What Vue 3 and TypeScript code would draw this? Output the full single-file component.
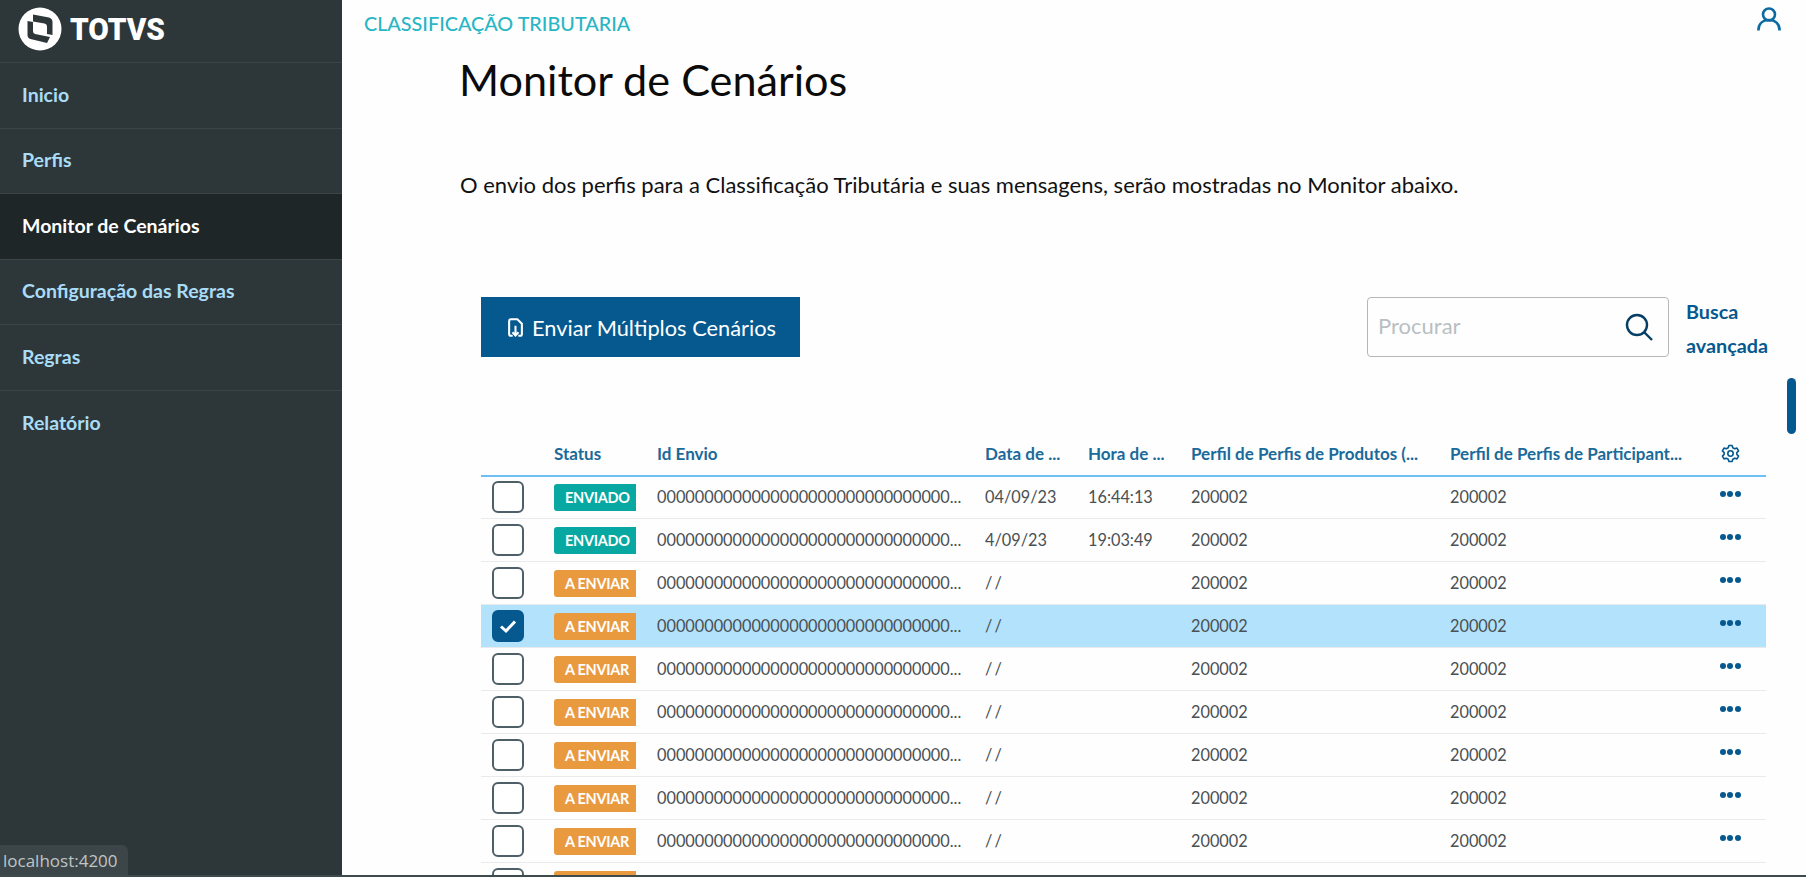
<script setup lang="ts">
interface Row { status: string; date: string; time: string; selected?: boolean }
const menu: string[] = ['Inicio', 'Perfis', 'Monitor de Cenários', 'Configuração das Regras', 'Regras', 'Relatório']
const rows: Row[] = [
  { status: 'ENVIADO', date: '04/09/23', time: '16:44:13' },
  { status: 'ENVIADO', date: '4/09/23', time: '19:03:49' },
  { status: 'A ENVIAR', date: '/ /', time: '' },
  { status: 'A ENVIAR', date: '/ /', time: '', selected: true },
  { status: 'A ENVIAR', date: '/ /', time: '' },
  { status: 'A ENVIAR', date: '/ /', time: '' },
  { status: 'A ENVIAR', date: '/ /', time: '' },
  { status: 'A ENVIAR', date: '/ /', time: '' },
  { status: 'A ENVIAR', date: '/ /', time: '' },
  { status: 'A ENVIAR', date: '/ /', time: '' }
]
const idEnvio = '0000000000000000000000000000000'
</script>

<template>
  <div class="app">
    <aside class="side">
      <div class="brand">
        <svg class="mark" viewBox="0 0 44 44" width="44" height="44">
          <circle cx="22" cy="22" r="21.5" fill="#fff" />
          <path d="M15 7.5 L31 10.5 Q34.5 11.5 34.5 15 V28 L29 27 V19.5 Q29 17 26.5 16.5 L15 14.5 Z" fill="#2d3739" />
          <path d="M9.5 14 V28 Q9.5 31 12.5 32 L29 36 L32 30 L17 27 Q15 26.5 15 24 V15 Z" fill="#2d3739" />
        </svg>
        <span class="wordmark">TOTVS</span>
      </div>
      <nav>
        <a v-for="m in menu" :key="m" class="item" :class="{ on: m === 'Monitor de Cenários' }">{{ m }}</a>
      </nav>
    </aside>
    <main class="main">
      <header class="top">
        <span class="crumb">CLASSIFICAÇÃO TRIBUTARIA</span>
        <svg class="user" viewBox="0 0 24 24" width="24" height="24" fill="none" stroke="#0c6aa3" stroke-width="2.6">
          <circle cx="12" cy="7.5" r="6" />
          <path d="M1.4 23.5 C1.4 16.5 6 13 12 13 C18 13 22.6 16.5 22.6 23.5" />
        </svg>
      </header>
      <div class="content">
        <h1>Monitor de Cenários</h1>
        <p class="lead">O envio dos perfis para a Classificação Tributária e suas mensagens, serão mostradas no Monitor abaixo.</p>
        <div class="actions">
          <button class="send">
            <svg viewBox="0 0 16 20" width="15" height="19" fill="none" stroke="#fff" stroke-width="2.2">
              <path d="M5 18.8 H3.2 Q1.2 18.8 1.2 16.8 V3.2 Q1.2 1.2 3.2 1.2 H10 L14.8 6 V16.8 Q14.8 18.8 12.8 18.8 H11" />
              <path d="M8 8 V18 M4.8 15 L8 18.5 L11.2 15" />
            </svg>
            <span>Enviar Múltiplos Cenários</span>
          </button>
          <div class="search-wrap">
            <div class="search">
              <span class="ph">Procurar</span>
              <svg viewBox="0 0 28 28" width="28" height="28" fill="none" stroke="#063f66" stroke-width="2.4">
                <circle cx="12" cy="12" r="10" />
                <path d="M19.5 19.5 L27 27" />
              </svg>
            </div>
            <a class="adv">Busca<br />avançada</a>
          </div>
        </div>
        <div class="table">
          <div class="row head">
            <span></span>
            <span>Status</span>
            <span>Id Envio</span>
            <span>Data de ...</span>
            <span>Hora de ...</span>
            <span>Perfil de Perfis de Produtos (...</span>
            <span>Perfil de Perfis de Participant...</span>
            <span class="act">
              <svg viewBox="0 0 24 24" width="19" height="19" fill="none" stroke="#05598f" stroke-width="2" stroke-linejoin="round">
                <path d="M10 1.8 h4 l.9 3 2.3 1.2 3-.8 2 3.5-2.2 2.2 v2.2 l2.2 2.2-2 3.5-3-.8-2.3 1.2-.9 3 h-4 l-.9-3-2.3-1.2-3 .8-2-3.5 2.2-2.2 v-2.2 l-2.2-2.2 2-3.5 3 .8 2.3-1.2 z" />
                <circle cx="12" cy="12" r="3.4" />
              </svg>
            </span>
          </div>
          <div v-for="(r, i) in rows" :key="i" class="row body" :class="{ sel: r.selected }">
            <span class="cb" :class="{ checked: r.selected }">
              <svg v-if="r.selected" viewBox="0 0 20 20" width="20" height="20" fill="none" stroke="#fff" stroke-width="3">
                <path d="M3 10.5 L8 15 L17 5.5" />
              </svg>
            </span>
            <span class="badge" :class="r.status === 'ENVIADO' ? 'ok' : 'wait'">{{ r.status }}</span>
            <span class="cell id">{{ idEnvio }}...</span>
            <span class="cell">{{ r.date }}</span>
            <span class="cell">{{ r.time }}</span>
            <span class="cell">200002</span>
            <span class="cell">200002</span>
            <span class="act dots"><i></i><i></i><i></i></span>
          </div>
        </div>
      </div>
      <div class="thumb"></div>
    </main>
    <div class="status-bubble">localhost:4200</div>
  </div>
</template>

<style>
html, body { margin: 0; overflow: hidden; }
</style>

<style scoped>
.app { display: flex; height: 875px; width: 1806px; overflow: hidden; border-bottom: 2px solid #3f4a4d; font-family: Lato, "Noto Sans", sans-serif; background: #fefefe; position: relative; }
.side { width: 342px; flex: none; background: #2d3739; }
.brand { height: 63px; display: flex; align-items: center; padding: 0 0 4px 18px; gap: 8px; box-sizing: border-box; border-bottom: 1px solid #3b4547; }
.wordmark { font-family: Roboto, sans-serif; font-weight: 900; font-size: 32px; color: #fff; transform: scaleX(0.93); transform-origin: left center; }
.item { display: flex; align-items: center; height: 65.5px; box-sizing: border-box; padding: 0 0 2px 22px; font-size: 19.5px; font-weight: 700; color: #a9dcf7; border-bottom: 1px solid #3b4547; }
.item:last-child { border-bottom: 0; }
.item.on { background: #1e2628; color: #fff; }
.main { flex: 1; position: relative; min-width: 0; }
.top { height: 46px; display: flex; justify-content: space-between; padding: 10px 25px 0 22px; box-sizing: border-box; }
.crumb { font-size: 19.8px; line-height: 26px; color: #29b6c5; font-weight: 500; }
.user { margin-top: -3px; }
.content { padding-left: 118px; padding-right: 40px; }
h1 { margin: 8px 0 0 -1px; font-size: 43.2px; font-weight: 400; line-height: 50px; color: #0b0b0b; }
.lead { margin: 67px 0 0; font-size: 22px; line-height: 28px; color: #111; }
.actions { display: flex; justify-content: space-between; margin: 98px 0 0 21px; height: 60px; }
.send { width: 319px; height: 60px; border: 0; background: #05598f; color: #fff; font: inherit; font-size: 21.8px; display: flex; align-items: center; justify-content: center; gap: 9px; padding: 0 0 0 3px; }
.search-wrap { display: flex; flex: none; width: 399px; }
.search { width: 302px; flex: none; height: 60px; box-sizing: border-box; border: 1px solid #b4b8ba; border-radius: 4px; display: flex; align-items: center; justify-content: space-between; padding: 0 15px 0 10px; }
.ph { font-size: 22px; color: #b9bfc2; margin-top: -3px; }
.adv { margin-left: 17px; font-size: 19.8px; font-weight: 700; line-height: 34px; color: #05598f; margin-top: -3px; white-space: nowrap; }
.table { margin: 59px 0 0 21px; width: 1285px; }
.row { display: grid; grid-template-columns: 73px 103px 328px 103px 103px 259px 260px 56px; align-items: center; }
.head { padding-top: 15px; height: 44px; margin-bottom: -1px; font-size: 17px; font-weight: 700; color: #1a6a9a; border-bottom: 2px solid #6cc0f5; }
.body { height: 43px; box-sizing: border-box; border-bottom: 1px solid #e8eaeb; font-size: 16.3px; color: #4a5053; }
.body.sel { background: #b3e2fc; }
.cb { width: 32px; height: 32px; box-sizing: border-box; margin-left: 11px; border: 2px solid #4f5f68; border-radius: 6px; background: #fff; display: flex; align-items: center; justify-content: center; }
.cb.checked { background: #05598f; border-color: #05598f; }
.badge { width: 82px; height: 27px; line-height: 27px; box-sizing: border-box; padding-left: 11px; white-space: nowrap; font-size: 14.5px; font-weight: 700; letter-spacing: -0.3px; color: #fff; border-radius: 3px 0 0 3px; }
.badge.ok { background: #07a8a2; }
.badge.wait { background: #ea9a3e; }
.cell { white-space: nowrap; overflow: hidden; word-spacing: -2px; margin-top: -1px; }
.act { display: flex; justify-content: center; margin-left: -16px; }
.dots { gap: 1.5px; margin-top: -6px; }
.dots i { width: 6px; height: 6px; border-radius: 50%; background: #05598f; }
.thumb { position: absolute; top: 378px; right: 10px; width: 9px; height: 56px; border-radius: 5px; background: #05598f; }
.status-bubble { position: absolute; left: 0; bottom: 0; height: 30px; line-height: 32px; width: 125px; padding-left: 3px; background: #3c4548; color: #bfc5c6; font-family: "Open Sans", sans-serif; font-size: 17px; border-top-right-radius: 6px; }
</style>
